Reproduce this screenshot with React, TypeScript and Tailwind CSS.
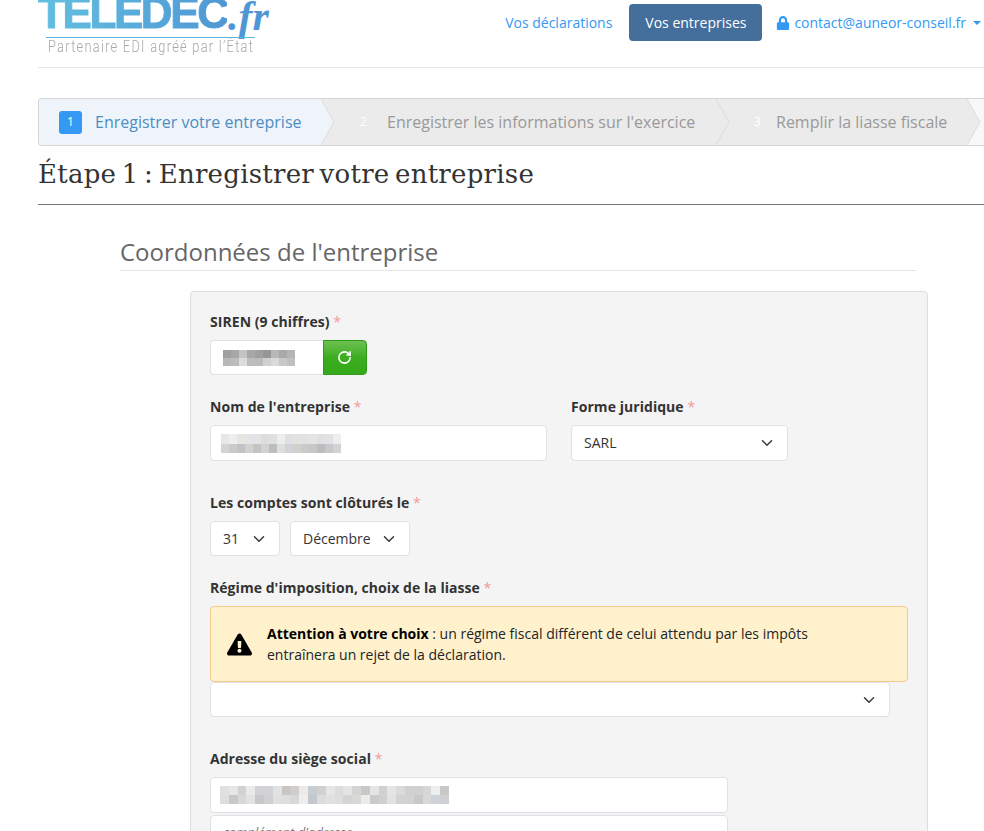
import { FaExclamationTriangle, FaLock } from "react-icons/fa";
import { RotateCw } from "lucide-react";

const siren = [
  ["#a0a0a0", "#a8a8a8", "#c4c4c4", "#a8a8a8", "#a0a0a0", "#969696", "#b8b8b8", "#a8a8a8", "#b4b4b4"],
  ["#b8b8b8", "#bcbcbc", "#dcdcdc", "#bcbcbc", "#bcbcbc", "#d0d0d0", "#dadada", "#c8c8c8", "#c0c0c0"],
];
const nom = [
  ["#e8e6e6", "#eceef0", "#e6e5e0", "#e2e4e8", "#e4e2e4", "#dedddb", "#dfe0e2", "#eceeee", "#e0e0e2", "#e4e1de", "#e0e2e4", "#e6e4e2", "#dfe0e2", "#e2e2e4", "#eeeeee"],
  ["#d6d4d2", "#c8cacc", "#c2c2c6", "#d0d2d2", "#c2c4c4", "#d2d2ce", "#bcbebe", "#dededc", "#d0d4da", "#d2d0cc", "#c8cacc", "#c6c8c8", "#bcbcbc", "#c6c8cc", "#d2d2d2"],
];
const addr = [
  ["#e0e0e0", "#e6e6e4", "#d2d2d2", "#eaeaea", "#d2d2d4", "#d0d2d4", "#dfe3e6", "#c8c6c4", "#d0cecc", "#ecebea", "#c8cdd2", "#d0d0ce", "#e6e6e6", "#dcdcda", "#e4e4e4", "#d4d4d4", "#c8c8c8", "#e2e4e6", "#d2d0d0", "#e2e4e6", "#dcdad8", "#d0d0d0", "#cfd0d0", "#d6d6d6", "#eceef0", "#c8c8c8"],
  ["#dedede", "#c8c8ca", "#d8d8d6", "#e4e2e0", "#c8c8ca", "#d0d0d2", "#e0e0e0", "#dcdee0", "#d8d8d8", "#f0eeec", "#c2c8ce", "#dcdcdc", "#e0e0de", "#dededc", "#d4d4d4", "#d8d8d6", "#ecebe8", "#c8cacc", "#d0d0d0", "#e0e2e4", "#d4d2d0", "#d2d2d2", "#c6c8ca", "#d8d8d8", "#ccd2d8", "#d0d0d2"],
];

function Mosaic({ rows, cw, ch }: { rows: string[][]; cw: number; ch: number }) {
  const w = rows[0].length * cw;
  const h = rows.length * ch;
  return (
    <svg width={w} height={h} viewBox={`0 0 ${w} ${h}`} className="block shrink-0" shapeRendering="crispEdges">
      {rows.map((r, y) => r.map((c, x) => <rect key={`${x}-${y}`} x={x * cw} y={y * ch} width={cw} height={ch} fill={c} />))}
    </svg>
  );
}

function Label({ children, className = "" }: { children: React.ReactNode; className?: string }) {
  return (
    <div className={`text-[14px] leading-[21px] font-bold tracking-[0.050px] text-[#333] ${className}`}>
      {children} <span className="font-normal text-[#f19a9a]">*</span>
    </div>
  );
}

function Select({ value, className = "" }: { value?: string; className?: string }) {
  return (
    <div className={`flex items-center justify-between rounded-[4px] border border-[#dee2e6] bg-white pl-3 pr-[14px] text-[14px] text-[#333] ${className}`}>
      <span>{value}</span>
      <svg width="12" height="12" viewBox="0 0 16 16" fill="none" stroke="#343a40" strokeWidth="2" strokeLinecap="round" strokeLinejoin="round">
        <path d="M2 5l6 6 6-6" />
      </svg>
    </div>
  );
}

function Chevron({ fill }: { fill: string }) {
  return (
    <svg width="14" height="46" viewBox="0 0 14 46" className="absolute -right-[13px] top-0 z-10 block">
      <path d="M0 0L13 23L0 46" fill={fill} stroke="#dcdcdc" strokeWidth="1" />
    </svg>
  );
}

function Step({ n, text, fill, className, numClass, textClass }: { n: string; text: string; fill: string; className: string; numClass: string; textClass: string }) {
  return (
    <div className={`relative flex h-[46px] shrink-0 items-center ${className}`}>
      <span className={numClass}>{n}</span>
      <span className={`whitespace-nowrap text-[16px] ${textClass}`}>{text}</span>
      <Chevron fill={fill} />
    </div>
  );
}

export default function App() {
  return (
    <div className="h-[831px] w-[984px] overflow-hidden bg-white pl-[38px] font-['Open_Sans',sans-serif] text-[14px] text-[#212529]">
      <div className="w-[980px]">
        <header className="flex h-[68px] items-start justify-between border-b border-[#e5e5e5]">
          <div className="relative h-[60px] w-[240px] overflow-hidden">
            <div className="absolute -top-[9px] left-0 bg-gradient-to-r from-[#63c0e0] to-[#4f97d4] bg-clip-text font-['Liberation_Sans',sans-serif] text-[44px] leading-[44px] font-bold tracking-[-2.400px] whitespace-nowrap text-transparent [-webkit-text-stroke:1px_transparent]">
              TELEDEC
            </div>
            <div className="absolute top-[-6px] left-[190px] font-['Liberation_Serif',serif] text-[42px] leading-[44px] font-bold text-[#4f97d4] italic">.fr</div>
            <div className="absolute top-[37px] left-[8px] h-px w-[209px] bg-[#5ab5dc]" />
            <div className="absolute top-[37px] left-[10px] origin-left scale-x-[0.8] font-['Roboto',sans-serif] text-[16px] leading-[20px] font-light tracking-[1.600px] whitespace-nowrap text-[#a8a8a8]">
              Partenaire EDI agréé par l’État
            </div>
          </div>
          <nav className="mr-[37px] flex items-center pt-1">
            <span className="mr-[17px] text-[#3399f3]">Vos déclarations</span>
            <span className="flex h-[37px] w-[133px] items-center justify-center rounded-[4px] bg-[#446e9b] text-white">Vos entreprises</span>
            <span className="ml-[14px] flex items-center text-[#3399f3]">
              <FaLock className="mr-[4px] text-[14px]" />
              contact@auneor-conseil.fr
              <span className="ml-[7px] h-0 w-0 border-x-[4px] border-t-[4px] border-x-transparent border-t-[#3399f3]" />
            </span>
          </nav>
        </header>

        <div className="mt-[30px] flex h-[48px] overflow-hidden rounded-l-[4px] border-y border-l border-[#d6d6d6] bg-[#f8f8f8]">
          <Step n="1" text="Enregistrer votre entreprise" fill="#eff4fb" className="w-[283px] bg-[#eff4fb] pl-5" numClass="mr-[13px] flex h-[23px] w-[23px] items-center justify-center rounded-[3px] bg-[#3399f3] text-[12px] text-white" textClass="text-[#4a8ec2]" />
          <Step n="2" text="Enregistrer les informations sur l'exercice" fill="#ebebeb" className="w-[395px] bg-[#ebebeb] pl-[38px]" numClass="mr-[19px] w-[8px] text-[12px] text-white" textClass="text-[#999]" />
          <Step n="3" text="Remplir la liasse fiscale" fill="#ebebeb" className="w-[251px] bg-[#ebebeb] pl-[37px]" numClass="mr-[14px] w-[8px] text-[12px] text-white" textClass="text-[#999]" />
        </div>

        <h1 className="mt-[8px] h-[51px] border-b border-[#777] font-['DejaVu_Serif',serif] text-[26px] leading-[40px] tracking-[0.260px] text-[#333] [word-spacing:-3px]">
          Étape 1 : Enregistrer votre entreprise
        </h1>

        <div className="ml-[82px] w-[796px]">
          <h2 className="mt-[27px] h-[39px] border-b border-[#e5e5e5] text-[24px] leading-[39px] text-[#666]">Coordonnées de l'entreprise</h2>
        </div>

        <div className="mt-[20px] ml-[152px] h-[560px] w-[738px] rounded-[4px] border border-[#dddddd] bg-[#f4f4f4] pt-[19px] pl-[19px]">
          <Label>SIREN (9 chiffres)</Label>
          <div className="mt-[8px] flex h-[35px]">
            <div className="flex w-[113px] items-center rounded-l-[4px] border border-r-0 border-[#dee2e6] bg-white pl-[12px]">
              <Mosaic rows={siren} cw={8} ch={8} />
            </div>
            <div className="flex w-[44px] items-center justify-center rounded-r-[4px] border border-[#2f9a17] bg-gradient-to-b from-[#6cc050] via-[#3aae1e] to-[#36a81b] pr-[2px] text-white">
              <RotateCw size={15} strokeWidth={2.500} />
            </div>
          </div>

          <div className="mt-[21px] flex gap-6">
            <div>
              <Label>Nom de l'entreprise</Label>
              <div className="mt-[8px] flex h-[36px] w-[337px] items-center rounded-[4px] border border-[#dee2e6] bg-white pl-[10px]">
                <Mosaic rows={nom} cw={8} ch={9.500} />
              </div>
            </div>
            <div>
              <Label>Forme juridique</Label>
              <Select value="SARL" className="mt-[8px] h-[36px] w-[217px] pb-px" />
            </div>
          </div>

          <Label className="mt-[31px]">Les comptes sont clôturés le</Label>
          <div className="mt-[8px] flex gap-[10px]">
            <Select value="31" className="h-[35px] w-[70px]" />
            <Select value="Décembre" className="h-[35px] w-[120px]" />
          </div>

          <Label className="mt-[21px]">Régime d'imposition, choix de la liasse</Label>
          <div className="mt-[8px] flex h-[76px] w-[698px] items-center rounded-[4px] border border-[#f5c98c] bg-[#fff1cc] pl-[16px] text-[#212529]">
            <FaExclamationTriangle className="mr-[15px] shrink-0 text-[25px] text-black" />
            <p className="w-[560px] leading-[21px]">
              <b className="font-bold text-black">Attention à votre choix</b> : un régime fiscal différent de celui attendu par les impôts entraînera un rejet de la déclaration.
            </p>
          </div>
          <Select className="h-[35px] w-[680px]" />

          <Label className="mt-[31px]">Adresse du siège social</Label>
          <div className="relative mt-[8px] flex h-[36px] w-[518px] items-center rounded-[4px] border border-[#dee2e6] bg-white pl-[9px]">
            <Mosaic rows={addr} cw={8.810} ch={9} />
          </div>
          <div className="mt-[2px] flex h-[36px] w-[518px] items-center rounded-[4px] border border-[#dee2e6] bg-white pl-[12px] text-[13px] text-[#777] italic">
            complément d'adresse
          </div>
        </div>
      </div>
    </div>
  );
}
